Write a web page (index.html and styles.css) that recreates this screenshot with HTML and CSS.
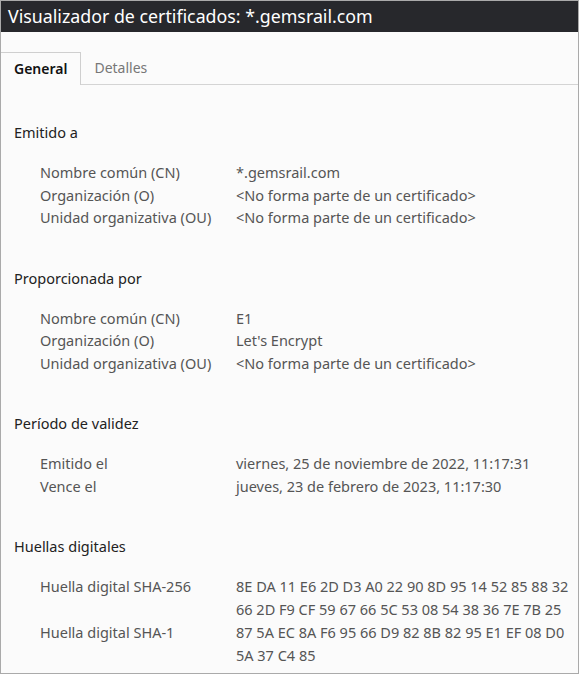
FILE: index.html
```html
<!DOCTYPE html>
<html lang="es">

<head>
  <meta charset="UTF-8" />
  <title>Visualizador de certificados: *.gemsrail.com</title>
  <link rel="stylesheet" href="styles.css">
</head>

<body>
  <div class="window">
    <div class="titlebar">Visualizador de certificados: *.gemsrail.com</div>

    <div class="tabs">
      <div class="tab active">General</div>
      <div class="tab">Detalles</div>
    </div>

    <div class="content">
      <div class="section">
        <h3>Emitido a</h3>
        <div class="row"><span class="label">Nombre común (CN)</span><span class="value">*.gemsrail.com</span></div>
        <div class="row"><span class="label">Organización (O)</span><span class="value">&lt;No forma parte de un certificado&gt;</span></div>
        <div class="row"><span class="label">Unidad organizativa (OU)</span><span class="value">&lt;No forma parte de un certificado&gt;</span></div>
      </div>

      <div class="section">
        <h3>Proporcionada por</h3>
        <div class="row"><span class="label">Nombre común (CN)</span><span class="value">E1</span></div>
        <div class="row"><span class="label">Organización (O)</span><span class="value">Let's Encrypt</span></div>
        <div class="row"><span class="label">Unidad organizativa (OU)</span><span class="value">&lt;No forma parte de un certificado&gt;</span></div>
      </div>

      <div class="section">
        <h3>Período de validez</h3>
        <div class="row"><span class="label">Emitido el</span><span class="value">viernes, 25 de noviembre de 2022, 11:17:31</span></div>
        <div class="row"><span class="label">Vence el</span><span class="value">jueves, 23 de febrero de 2023, 11:17:30</span></div>
      </div>

      <div class="section">
        <h3>Huellas digitales</h3>
        <div class="row hex"><span class="label">Huella digital SHA-256</span><span class="value">8E DA 11 E6 2D D3 A0 22 90 8D 95 14 52 85 88 32 66 2D F9 CF 59 67 66 5C 53 08 54 38 36 7E 7B 25</span></div>
        <div class="row hex"><span class="label">Huella digital SHA-1</span><span class="value">87 5A EC 8A F6 95 66 D9 82 8B 82 95 E1 EF 08 D0 5A 37 C4 85</span></div>
      </div>
    </div>
  </div>
</body>

</html>
```

FILE: styles.css
```css
html,
body {
  margin: 0;
  padding: 0;
  height: 100%;
}

body {
  font-family: 'Noto Sans', 'Open Sans', sans-serif;
  background: #fbfbfb;
}

.window {
  box-sizing: border-box;
  height: 674px;
  border: 1px solid #aaaaaa;
  background: #fbfbfb;
  overflow: hidden;
}

.titlebar {
  height: 31px;
  background: #27282c;
  color: #ffffff;
  font-size: 17.8px;
  line-height: 31px;
  padding-left: 7px;
}

.tabs {
  display: flex;
  margin-top: 20px;
  border-bottom: 1px solid #d4d4d4;
}

.tab {
  padding: 0 13px;
  height: 31px;
  line-height: 31px;
  font-size: 14px;
  color: #777777;
}

.tab.active {
  color: #111111;
  font-weight: 600;
  border-top: 1px solid #cfcfcf;
  border-right: 1px solid #cfcfcf;
  background: #fbfbfb;
  margin-bottom: -1px;
  height: 32px;
}

.content {
  padding: 36px 0 0 13px;
}

.section {
  margin-bottom: 38px;
}

h3 {
  margin: 0 0 18px;
  font-size: 14.5px;
  font-weight: normal;
  color: #222222;
  line-height: 22px;
}

.row {
  display: flex;
  font-size: 14.5px;
  line-height: 22.5px;
  color: #555555;
  padding-left: 26px;
  padding-right: 4px;
}

.row.hex {
  margin-bottom: 1px;
}

.label {
  width: 196px;
  flex-shrink: 0;
}

.value {
  flex: 1;
}
```
